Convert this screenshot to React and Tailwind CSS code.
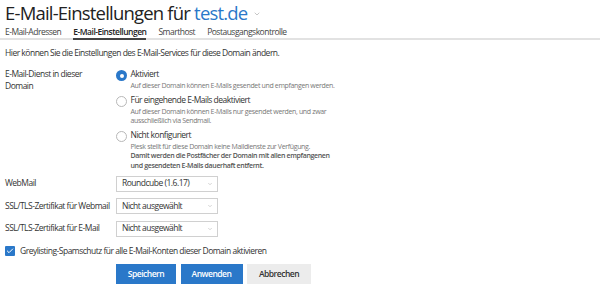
import { Check, ChevronDown } from "lucide-react";

const font = { fontFamily: '"Open Sans", "Noto Sans", sans-serif' };

function Radio({ checked }) {
  return checked ? (
    <span className="mt-[2px] flex h-[11px] w-[11px] shrink-0 items-center justify-center rounded-full bg-[#2a78c9]">
      <span className="h-[4px] w-[4px] rounded-full bg-white" />
    </span>
  ) : (
    <span className="mt-[2px] h-[11px] w-[11px] shrink-0 rounded-full border border-[#b8b8b8] bg-white" />
  );
}

function Option({ checked, title, children }) {
  return (
    <div className="flex gap-[3.5px]">
      <Radio checked={checked} />
      <div>
        <div className="text-[8.5px] leading-[12px] tracking-[-0.5px] text-[#333]">{title}</div>
        <div className="mt-[1px] text-[7px] leading-[9.5px] tracking-[-0.35px] text-[#777]">
          {children}
        </div>
      </div>
    </div>
  );
}

function Select({ value }) {
  return (
    <div className="flex h-[16px] w-[102px] items-center justify-between border border-[#d0d0d0] bg-white pl-[5px] pr-[4px] text-[8.5px] tracking-[-0.5px] text-[#333]">
      <span>{value}</span>
      <ChevronDown className="h-[6px] w-[6px] text-[#aaa]" strokeWidth={2} />
    </div>
  );
}

function Row({ label, children }) {
  return (
    <div className="flex h-[16px] items-center">
      <div className="w-[111px]">{label}</div>
      {children}
    </div>
  );
}

export default function App() {
  return (
    <div className="h-[292px] w-[600px] overflow-hidden bg-white" style={font}>
      <h1 className="flex items-center px-[5px] text-[18.5px] leading-[26px] tracking-[-0.8px] text-[#222]">
        E-Mail-Einstellungen für&nbsp;<span className="text-[#2a78c9]">test.de</span>
        <ChevronDown className="ml-[6px] mt-[2px] h-[8px] w-[8px] text-[#aaa]" strokeWidth={2} />
      </h1>

      <div className="mt-[1px] flex gap-[12px] border-b-2 border-[#e2e2e2] px-[5px] text-[8.5px] leading-[10px] tracking-[-0.5px] text-[#444]">
        <span className="pb-[1px]">E-Mail-Adressen</span>
        <span className="-mb-[2px] border-b-2 border-[#444] pb-[1px] font-semibold text-[#222]">
          E-Mail-Einstellungen
        </span>
        <span className="pb-[1px]">Smarthost</span>
        <span className="pb-[1px]">Postausgangskontrolle</span>
      </div>

      <div className="px-[5px] text-[8.5px] tracking-[-0.5px] text-[#333]">
        <p className="mt-[8px] leading-[10px]">
          Hier können Sie die Einstellungen des E-Mail-Services für diese Domain ändern.
        </p>

        <div className="mt-[10px] flex">
          <div className="w-[111px] leading-[12px]">
            E-Mail-Dienst in dieser
            <br />
            Domain
          </div>
          <div className="flex flex-col gap-[3px]">
            <Option checked title="Aktiviert">
              Auf dieser Domain können E-Mails gesendet und empfangen werden.
            </Option>
            <Option title="Für eingehende E-Mails deaktiviert">
              Auf dieser Domain können E-Mails nur gesendet werden, und zwar
              <br />
              ausschließlich via Sendmail.
            </Option>
            <Option title="Nicht konfiguriert">
              Plesk stellt für diese Domain keine Maildienste zur Verfügung.
              <br />
              <span className="font-semibold text-[#555]">
                Damit werden die Postfächer der Domain mit allen empfangenen
                <br />
                und gesendeten E-Mails dauerhaft entfernt.
              </span>
            </Option>
          </div>
        </div>

        <div className="mt-[5.5px] flex flex-col gap-[6.5px]">
          <Row label="WebMail">
            <Select value="Roundcube (1.6.17)" />
          </Row>
          <Row label="SSL/TLS-Zertifikat für Webmail">
            <Select value="Nicht ausgewählt" />
          </Row>
          <Row label="SSL/TLS-Zertifikat für E-Mail">
            <Select value="Nicht ausgewählt" />
          </Row>
        </div>

        <div className="mt-[9.5px] flex h-[10px] items-center gap-[5px]">
          <span className="flex h-[10px] w-[10px] shrink-0 items-center justify-center rounded-[1px] bg-[#2a78c9]">
            <Check className="h-[8px] w-[8px] text-white" strokeWidth={3} />
          </span>
          <span>Greylisting-Spamschutz für alle E-Mail-Konten dieser Domain aktivieren</span>
        </div>

        <div className="ml-[111px] mt-[8px] flex gap-[4.5px] font-semibold">
          <button className="h-[20px] w-[60px] bg-[#2a78c9] text-white">Speichern</button>
          <button className="h-[20px] w-[62px] bg-[#2a78c9] text-white">Anwenden</button>
          <button className="h-[20px] w-[64px] bg-[#ececec] text-[#333]">Abbrechen</button>
        </div>
      </div>
    </div>
  );
}
